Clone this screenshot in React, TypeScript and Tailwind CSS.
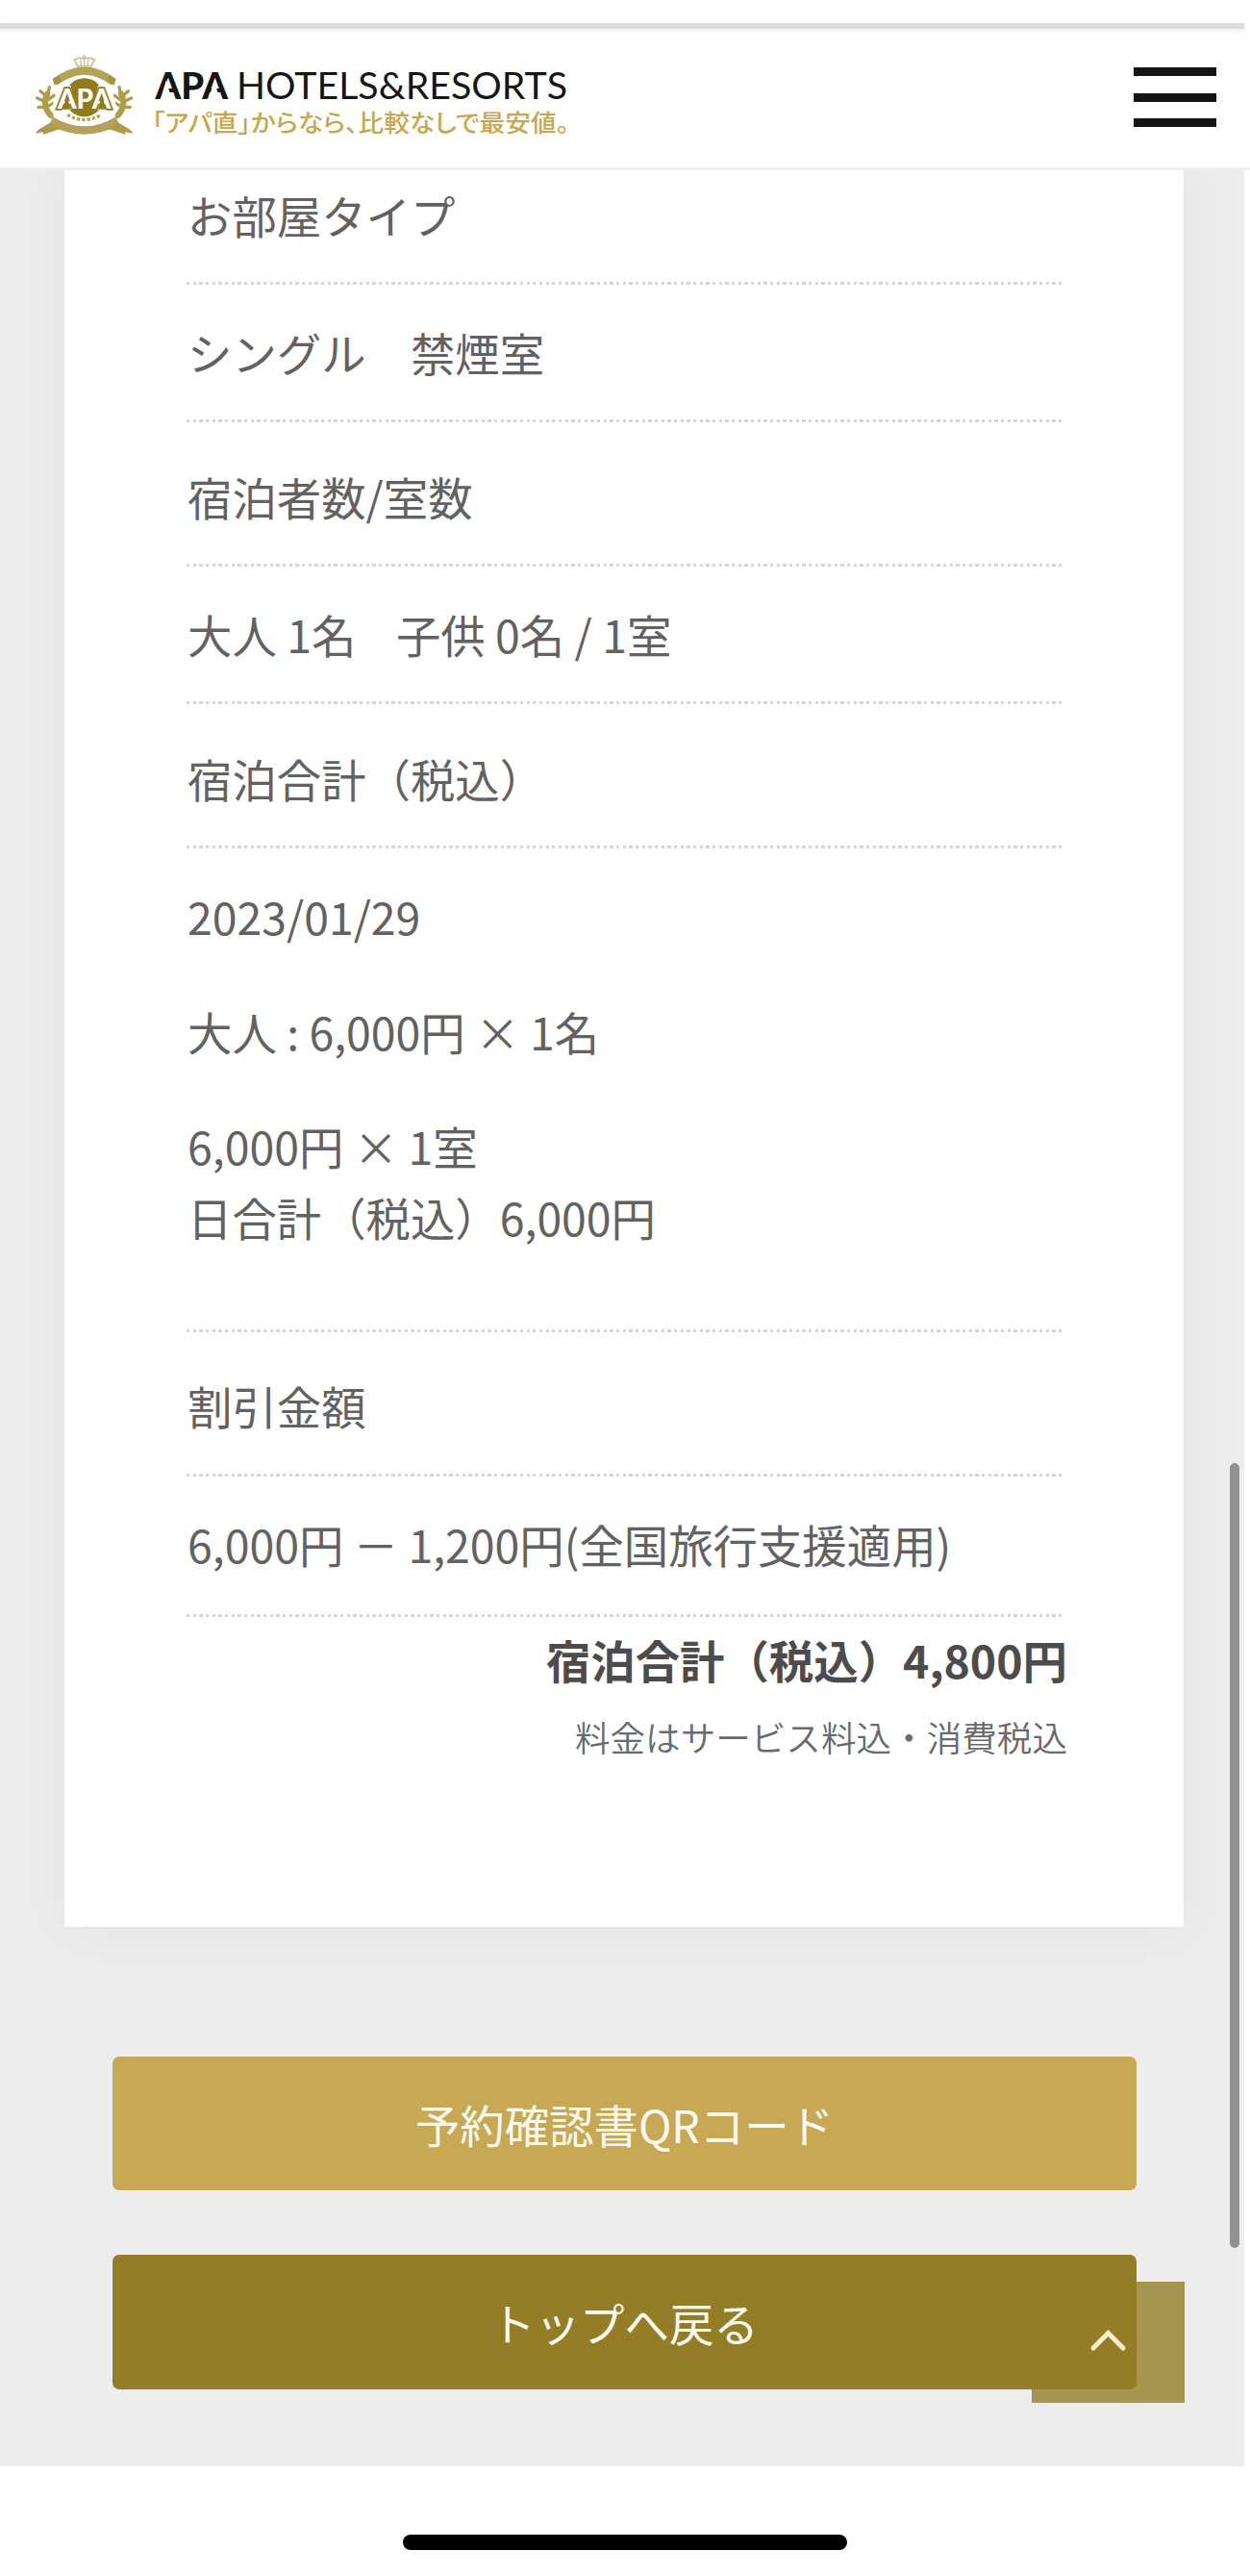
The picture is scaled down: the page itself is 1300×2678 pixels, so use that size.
import clsx from "clsx";

const ROWS = [
  { box: "h-[119px] pt-[9px]", lines: ["お部屋タイプ"] },
  { box: "h-[143px] pt-[33px]", lines: ["シングル　禁煙室"] },
  { box: "h-[150px] pt-[40px]", lines: ["宿泊者数/室数"] },
  { box: "h-[143px] pt-[33px]", lines: ["大人 1名    子供 0名 / 1室"] },
  { box: "h-[150px] pt-[40px]", lines: ["宿泊合計（税込）"] },
  {
    box: "h-[503px] pt-[33px]",
    lines: ["2023/01/29", "大人 : 6,000円 × 1名", "6,000円 × 1室\n日合計（税込）6,000円"],
  },
  { box: "h-[150px] pt-[39px]", lines: ["割引金額"] },
  { box: "h-[146px] pt-[33px]", lines: ["6,000円 － 1,200円(全国旅行支援適用)"] },
];

function Emblem() {
  return (
    <svg className="h-[120px] w-[140px] shrink-0" viewBox="0 0 420 360" fill="none">
      {/* Crown */}
      <g stroke="#cfc59a" strokeWidth="6">
        <path d="M182 86 L172 66 Q188 56 203 64 Q218 56 235 66 L225 86 Z" />
        <path d="M203 58 V86 M190 64 L194 86 M216 64 L212 86" strokeWidth="4" />
      </g>
      <circle cx="203" cy="57" r="5" fill="#cfc59a" />
      {/* Upper arch */}
      <path d="M112 136 Q203 66 294 136" stroke="#b3a257" strokeWidth="24" />
      <path d="M104 126 L124 114 L132 136 L110 146 Z M302 126 L282 114 L274 136 L296 146 Z" fill="#a8943f" />
      {/* Laurels */}
      <g stroke="#b09c4a" strokeWidth="10" strokeLinecap="round">
        <path d="M88 172 Q70 210 98 240 M318 172 Q336 210 308 240" strokeWidth="18" />
        <path d="M66 164 L84 180 M56 186 L78 196 M60 214 L80 214 M94 152 L90 172 M108 178 L92 190 M106 202 L88 212" />
        <path d="M340 164 L322 180 M350 186 L328 196 M346 214 L326 214 M312 152 L316 172 M298 178 L314 190 M300 202 L318 212" />
      </g>
      {/* Medallion */}
      <circle cx="203" cy="184" r="60" fill="#927b1d" />
      <path d="M130 236 Q203 282 276 236" stroke="#fff" strokeWidth="12" />
      <path d="M150 238 Q203 268 256 238" stroke="#b5a45b" strokeWidth="10" strokeDasharray="10 6" />
      {/* White plates behind the outer letters */}
      <path d="M98 222 L128 146 H160 L178 222 Z M308 222 L278 146 H246 L228 222 Z" fill="#fff" />
      <text
        x="203"
        y="218"
        textAnchor="middle"
        textLength="166"
        lengthAdjust="spacingAndGlyphs"
        fontSize="86"
        fontWeight="900"
        fill="#fff"
        stroke="#927b1d"
        strokeWidth="11"
        paintOrder="stroke"
        fontFamily="Lato, sans-serif"
      >
        APA
      </text>
      <path d="M148 178 L135 221 H161 Z M258 178 L245 221 H271 Z" fill="#927b1d" />
      {/* Ribbon */}
      <path d="M104 244 Q203 304 302 244 L312 270 Q203 328 94 270 Z" fill="#b3a257" />
      <path d="M98 262 L60 284 L50 296 L76 292 L74 300 L128 282 Z M308 262 L346 284 L356 296 L330 292 L332 300 L278 282 Z" fill="#ad9b4c" />
    </svg>
  );
}

function Wordmark() {
  return (
    <svg className="h-[90px] w-[440px]" viewBox="155 60 440 90">
      <g fontFamily="Lato, sans-serif" fill="#161616">
        <text x="161.500" y="103" fontSize="38" fontWeight="900" textLength="75.500" lengthAdjust="spacingAndGlyphs">
          APA
        </text>
        {/* Opens up the crossbars of both A's */}
        <path d="M173 83 L166.500 104 H178.500 Z M223 83 L216.500 104 H228.500 Z" fill="#fff" />
        <text x="246" y="103" fontSize="38" textLength="344" lengthAdjust="spacingAndGlyphs">
          HOTELS&amp;RESORTS
        </text>
      </g>
      <text
        x="158"
        y="137"
        fontSize="25"
        fontWeight="500"
        fill="#c9a650"
        textLength="434"
        lengthAdjust="spacingAndGlyphs"
        className="[font-feature-settings:'palt']"
      >
        「アパ直」からなら、比較なしで最安値。
      </text>
    </svg>
  );
}

function Header() {
  return (
    <header className="h-[177px] border-b-[3px] border-[#f0f0f0] bg-white">
      <div className="mt-6 h-[6px] w-[1294px] bg-[#dcdcdc] shadow-[0_2px_5px_rgba(0,0,0,0.08)]" />
      <div className="flex justify-between pl-5 pr-[35px]">
        <div className="flex pt-[10px]">
          <Emblem />
          <div className="-ml-[5px] pt-5">
            <Wordmark />
          </div>
        </div>
        <div className="flex w-[86px] flex-col gap-[17.500px] pt-10">
          <span className="h-[9px] bg-[#141414]" />
          <span className="h-[9px] bg-[#141414]" />
          <span className="h-[9px] bg-[#141414]" />
        </div>
      </div>
    </header>
  );
}

export default function App() {
  return (
    <div className="relative flex h-[2678px] w-[1300px] flex-col overflow-hidden bg-white font-['Noto_Sans_CJK_JP',sans-serif] text-[46.400px] leading-[74px] text-[#626262]">
      <Header />

      <main className="h-[2387px] w-[1294px] overflow-hidden bg-[#ededed]">
        {/* Reservation details */}
        <section className="ml-[67px] h-[1826px] w-[1164px] bg-white pl-[127px] shadow-[0_0_50px_rgba(0,0,0,0.05)]">
          {ROWS.map((row) => (
            <div key={row.lines[0]} className={clsx("flex w-[912px] flex-col justify-between", row.box)}>
              <div className="flex flex-col gap-[45.500px] whitespace-pre pl-px">
                {row.lines.map((line) => (
                  <p key={line}>{line}</p>
                ))}
              </div>
              <div className="h-[3px] bg-[repeating-linear-gradient(90deg,#d6d6d6_0_3.3px,transparent_3.3px_6.67px)]" />
            </div>
          ))}
          <div className="w-[916px] text-right">
            <p className="pt-[7px] font-bold text-[#4c4c4c]">宿泊合計（税込）4,800円</p>
            <p className="pt-[7px] text-[36.600px] font-[350] text-[#6a6a6a]">料金はサービス料込・消費税込</p>
          </div>
        </section>

        {/* Actions */}
        <div className="ml-[117px] mt-[135px] flex w-[1065px] flex-col gap-[67px] text-[#fffaf0]">
          <button className="h-[139px] rounded-[7px] bg-[#c7a955]">予約確認書QRコード</button>
          <button className="h-[140px] rounded-[7px] bg-[#937e27]">トップへ戻る</button>
        </div>
      </main>

      {/* Home indicator */}
      <div className="mx-auto mt-[71px] h-4 w-[462px] rounded-full bg-black" />

      {/* Back to top */}
      <div className="absolute left-[1073px] top-[2372px] h-[126px] w-[159px] bg-[#937e27]/80">
        <svg className="ml-[60px] mt-[48px] h-[26px] w-[40px]" viewBox="0 0 40 26" fill="none">
          <path d="M4 21 L19.500 5.500 L35 21" stroke="#fdeecb" strokeWidth="5" strokeLinecap="round" />
        </svg>
      </div>

      {/* Scrollbar */}
      <div className="absolute left-[1279px] top-[1521px] h-[816px] w-[10px] rounded-full bg-[#929292]" />
    </div>
  );
}
